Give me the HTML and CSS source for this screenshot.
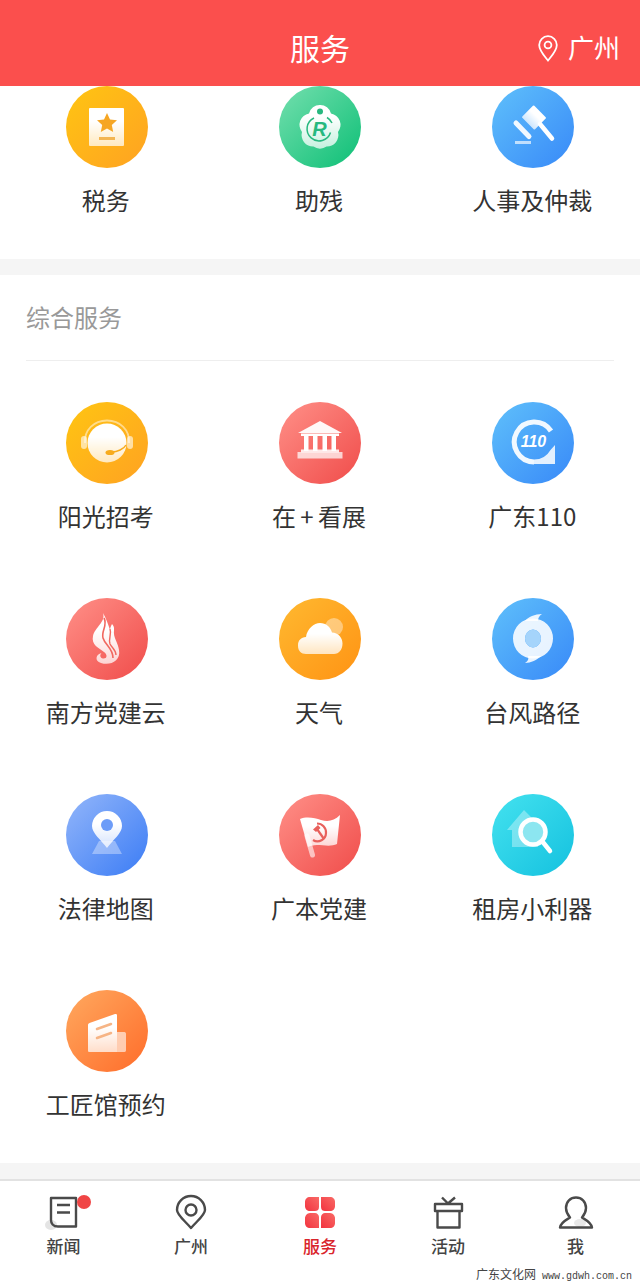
FILE: index.html
```html
<!DOCTYPE html>
<html lang="zh-CN">
<head>
<meta charset="utf-8">
<title>服务</title>
<link rel="stylesheet" href="styles.css">
</head>
<body>
<svg class="defs" width="0" height="0" aria-hidden="true">
  <defs>
    <linearGradient id="w" x1="0" y1="0" x2="0" y2="1"><stop offset="0.35" stop-color="#fff"/><stop offset="1" stop-color="#fff" stop-opacity="0.72"/></linearGradient>
    <linearGradient id="wf" gradientUnits="userSpaceOnUse" x1="0" y1="30" x2="0" y2="64"><stop offset="0" stop-color="#fff"/><stop offset="1" stop-color="#fff" stop-opacity="0.7"/></linearGradient>
    <linearGradient id="petal" x1="1" y1="0" x2="0" y2="1"><stop offset="0" stop-color="#f96a66"/><stop offset="1" stop-color="#f2333f"/></linearGradient>
  </defs>
</svg>
<header class="topbar">
  <h1 class="topbar-title">服务</h1>
  <div class="topbar-loc">
    <svg class="topbar-pin" viewBox="0 0 20 27" fill="none" stroke="#fff" stroke-width="1.8"><path d="M10 25.500C5.500 20 1.200 15.500 1.200 10A8.800 8.800 0 0 1 18.800 10C18.800 15.500 14.500 20 10 25.500Z"/><circle cx="10" cy="10" r="3.400"/></svg>
    <span>广州</span>
  </div>
</header>
<main>
  <section class="card card-first">
    <div class="grid">
      <a class="item">
        <div class="disc yellow"><svg viewBox="0 0 82 82"><rect x="23" y="22" width="35" height="38" rx="1" fill="url(#w)"/><path d="M41 27l3 6.500 7 .8-5.200 4.800 1.400 7L41 42.600 34.800 46l1.400-7-5.200-4.800 7-.8z" fill="#f6a623"/><rect x="33" y="51" width="16" height="3" fill="#f3b552"/></svg></div>
        <span class="label">税务</span>
      </a>
      <a class="item">
        <div class="disc green"><svg viewBox="0 0 82 82"><g fill="url(#wf)"><path d="M41 19a11 11 0 0 1 11 8.500 11.500 11.500 0 0 1 7 18.500 11.500 11.500 0 0 1-11.500 14.500 11 11 0 0 1-13 0A11.500 11.500 0 0 1 23 46a11.500 11.500 0 0 1 7-18.500A11 11 0 0 1 41 19z"/></g><circle cx="41" cy="25.500" r="3" fill="#27b87f"/><path d="M35 32a12 12 0 1 0 16.500 14.500M48 31.500a12 12 0 0 1 5 5.500" fill="none" stroke="#27b87f" stroke-width="1.500"/><text class="icon-r" x="40.500" y="50" text-anchor="middle">R</text></svg></div>
        <span class="label">助残</span>
      </a>
      <a class="item">
        <div class="disc blue"><svg viewBox="0 0 82 82"><rect x="33" y="23" width="18" height="17" rx="1" transform="rotate(45 42 31.500)" fill="url(#w)"/><path d="M48 38L60 52.500" stroke="#fff" stroke-width="4.500" stroke-linecap="round"/><path d="M24 37L37 50.500" stroke="#fff" stroke-opacity=".92" stroke-width="5" stroke-linecap="round"/><rect x="23" y="55" width="16" height="3" fill="#fff" fill-opacity=".65"/></svg></div>
        <span class="label">人事及仲裁</span>
      </a>
    </div>
  </section>

  <section class="card">
    <h2 class="card-title">综合服务</h2>
    <div class="grid grid-main">
      <a class="item">
        <div class="disc yellow"><svg viewBox="0 0 82 82"><circle cx="41" cy="41" r="19.500" fill="url(#w)"/><path d="M19 41C18 28 28 18.500 41 18.500S64 28 63 41" fill="none" stroke="#fff" stroke-opacity=".5" stroke-width="1.800"/><rect x="15" y="34" width="6" height="13" rx="3" fill="#fff" fill-opacity=".6"/><rect x="61" y="34" width="6" height="13" rx="3" fill="#fff" fill-opacity=".6"/><path d="M60 43c-2 4-9 7-14 7" fill="none" stroke="#f7ab1d" stroke-width="1.500"/><ellipse cx="44" cy="50.500" rx="4.500" ry="2.600" fill="#f7ab1d"/></svg></div>
        <span class="label">阳光招考</span>
      </a>
      <a class="item">
        <div class="disc red"><svg viewBox="0 0 82 82"><path d="M41 19L63 31H19z" fill="#fff" fill-opacity=".95"/><rect x="22" y="31.500" width="38" height="2.500" fill="#fff"/><path d="M25 34h4.500v15H25zM34 34h4.500v15H34zM43.500 34H48v15h-4.500zM52.500 34H57v15h-4.500z" fill="#fff"/><rect x="22" y="47.500" width="38" height="3" fill="#fff" fill-opacity=".85"/><rect x="18.500" y="50" width="45" height="6.500" fill="#fff" fill-opacity=".72"/></svg></div>
        <span class="label label-tight">在 + 看展</span>
      </a>
      <a class="item">
        <div class="disc blue"><svg viewBox="0 0 82 82"><path d="M59 29A20 20 0 1 0 42 60" fill="none" stroke="#fff" stroke-opacity=".92" stroke-width="5"/><path d="M42 62H63V43L58.500 48A19 19 0 0 1 42 57.500Z" fill="#fff" fill-opacity=".85"/><text class="icon-110" x="41.500" y="45" text-anchor="middle">110</text></svg></div>
        <span class="label">广东110</span>
      </a>

      <a class="item">
        <div class="disc red"><svg viewBox="0 0 82 82"><path d="M37 15C40 24 29 29 27 38C25 47 33 50 38 54C42 57 41 61 37 60.500C34 60 33.500 57 35.500 55C30 56 28 63 35 65C44 68 55 63 53 52C52 44 47 40 48 32C48.500 29 47 27 46 26C45 28 44 30 44 32C42 26 40 20 37 15Z" fill="url(#w)"/><path d="M38 20C42 27 35 33 37 40C39 47 47 50 47 60" fill="none" stroke="#f1685f" stroke-width="1.600"/><path d="M44 31C46 36 42 41 44 46C46 50 50 52 50 57" fill="none" stroke="#f1685f" stroke-width="1.400"/></svg></div>
        <span class="label">南方党建云</span>
      </a>
      <a class="item">
        <div class="disc amber"><svg viewBox="0 0 82 82"><circle cx="55" cy="29" r="9" fill="#fff" fill-opacity=".4"/><path d="M27 56c-5 0-8-3-8-8.500s3-8 8-8.500C28 31 35 25 41 25c6 0 10.500 4 12 9.500 6 0 10.500 5 10.500 11 0 6-3.500 10.500-8.500 10.500z" fill="url(#w)"/></svg></div>
        <span class="label">天气</span>
      </a>
      <a class="item">
        <div class="disc blue"><svg viewBox="0 0 82 82"><g fill="#fff" fill-opacity=".88"><path d="M33 23C36 19 43 16 50 16C47 18 46 20 46 23Z"/><path d="M49 58C45 62 39 65 33 65C36 63 37 61 36 58Z"/></g><path d="M41 20.500A20 20 0 1 1 41 60.500A20 20 0 1 1 41 20.500ZM41 31.500A8 9 0 1 0 41 49.500A8 9 0 1 0 41 31.500Z" fill="#fff" fill-opacity=".88"/><ellipse cx="41" cy="40.500" rx="8" ry="9" fill="#a5d4fb"/></svg></div>
        <span class="label">台风路径</span>
      </a>

      <a class="item">
        <div class="disc periwinkle"><svg viewBox="0 0 82 82"><path d="M33 47h16l7 13H26z" fill="#fff" fill-opacity=".35"/><path d="M41 54C35 46 26 39 26 32a15 15 0 0 1 30 0c0 7-9 14-15 22z" fill="url(#w)"/><circle cx="41" cy="31" r="6" fill="#6c9cf8"/></svg></div>
        <span class="label">法律地图</span>
      </a>
      <a class="item">
        <div class="disc red"><svg viewBox="0 0 82 82"><path d="M28 42L33.500 61" stroke="#fff" stroke-opacity=".6" stroke-width="5" stroke-linecap="round"/><path d="M21 25C28 22 36 24 42 26C49 28 55 27 61 21L58 50C52 53 44 51 38 51C34 51 31 52 29 53Z" fill="url(#w)"/><path d="M38 29.500A9 9 0 0 1 47 39A8.500 8.500 0 0 1 34 46" fill="none" stroke="#e8605c" stroke-width="2.200"/><path d="M38 35L45 45" stroke="#e8605c" stroke-width="2.200"/><path d="M34 35.500L39 31L41.500 34L37 38Z" fill="#e8605c"/></svg></div>
        <span class="label">广本党建</span>
      </a>
      <a class="item">
        <div class="disc cyan"><svg viewBox="0 0 82 82"><path d="M15 36L32 16L46 30V53H20V36Z" fill="#fff" fill-opacity=".35"/><circle cx="41" cy="38" r="12.500" fill="#8ce6f0" stroke="#fff" stroke-width="4.500"/><path d="M50 47L58 57" stroke="#fff" stroke-width="4.500" stroke-linecap="round"/></svg></div>
        <span class="label">租房小利器</span>
      </a>

      <a class="item">
        <div class="disc tangerine"><svg viewBox="0 0 82 82"><path d="M51 42h7.500c1 0 1.500 1 1.500 2V60c0 1-.5 2-1.500 2H51z" fill="#fff" fill-opacity=".6"/><path d="M22 35c0-1 .5-1.500 1.500-2L49 24c1-.3 2 .2 2 1V62H23.500c-1 0-1.500-.5-1.500-1.500z" fill="url(#w)"/><path d="M31 39L45 34M31 48L45 43" stroke="#f6b485" stroke-width="2.500" stroke-linecap="round"/></svg></div>
        <span class="label">工匠馆预约</span>
      </a>
    </div>
  </section>
</main>
<nav class="tabbar">
  <a class="tab">
    <svg class="tab-icon" viewBox="0 0 44 36"><ellipse cx="9" cy="30" rx="6" ry="5" fill="#e4e4e4"/><path d="M9 3H34V31.500H16C11 31.500 9 28 9 25z" fill="none" stroke="#4a4a4a" stroke-width="2.400" stroke-linejoin="round"/><path d="M15 10H28M15 17.500H28" stroke="#4a4a4a" stroke-width="2.400"/><circle cx="42" cy="7" r="7" fill="#f04545"/></svg>
    <span class="tab-label">新闻</span>
  </a>
  <a class="tab">
    <svg class="tab-icon" viewBox="0 0 44 36" fill="none" stroke="#4a4a4a" stroke-width="2.400"><path d="M22 33C16 26 8 20 8 15A14 14 0 0 1 36 15C36 20 28 26 22 33Z" stroke-linejoin="round"/><circle cx="22" cy="15" r="5.500"/></svg>
    <span class="tab-label">广州</span>
  </a>
  <a class="tab tab-on">
    <svg class="tab-icon" viewBox="0 0 44 36" fill="url(#petal)"><path d="M7 7c0-3 2-5 5-5h9v10c0 3-2 4-4 4h-5c-3 0-5-2-5-5z"/><path d="M37 7c0-3-2-5-5-5h-9v10c0 3 2 4 4 4h5c3 0 5-2 5-5z"/><path d="M7 28c0 3 2 5 5 5h9V22c0-2-2-4-4-4h-5c-3 0-5 3-5 5z"/><path d="M37 28c0 3-2 5-5 5h-9V22c0-2 2-4 4-4h5c3 0 5 3 5 5z"/></svg>
    <span class="tab-label">服务</span>
  </a>
  <a class="tab">
    <svg class="tab-icon" viewBox="0 0 44 36" fill="none" stroke="#4a4a4a" stroke-width="2.400" stroke-linejoin="round"><path d="M9 9H36V16H9zM11.500 16V32.500H33.500V16M16 2.500L22 8.500 29 2.500"/></svg>
    <span class="tab-label">活动</span>
  </a>
  <a class="tab">
    <svg class="tab-icon" viewBox="0 0 44 36" fill="none" stroke="#4a4a4a" stroke-width="2.400" stroke-linejoin="round"><ellipse cx="26" cy="28" rx="6" ry="4" fill="#e8e8e8" stroke="none"/><path d="M16 22.500C13 19 12 15.500 12 13C12 6.500 16.500 2.500 22 2.500S32 6.500 32 13C32 15.500 31 19 28 22.500C31 24.500 37 27 38 32.500H6C7 27 13 24.500 16 22.500Z"/></svg>
    <span class="tab-label">我</span>
  </a>
</nav>
<div class="watermark"><span class="wm-cn">广东文化网</span><span class="wm-en">www.gdwh.com.cn</span></div>
</body>
</html>
```

FILE: styles.css
```css
* { box-sizing: border-box; }

html, body {
  margin: 0;
  padding: 0;
  height: 1285px;
  overflow: hidden;
}

body {
  position: relative;
  display: flex;
  flex-direction: column;
  background: #f5f5f5;
  font-family: "Noto Sans CJK SC", "Noto Sans", sans-serif;
  color: #333;
}

.defs { display: block; height: 0; }

.topbar {
  position: relative;
  display: flex;
  align-items: center;
  justify-content: center;
  height: 86px;
  padding-top: 8px;
  background: #fb4f4d;
  color: #fff;
}

.topbar-title {
  margin: 0;
  font-size: 30px;
  line-height: 40px;
  font-weight: 400;
}

.topbar-loc {
  position: absolute;
  right: 20px;
  top: 27px;
  display: flex;
  align-items: center;
  gap: 10px;
  font-size: 26px;
  line-height: 40px;
  font-weight: 400;
}

.topbar-pin { width: 20px; height: 27px; margin-top: 2px; }

.card {
  background: #fff;
  margin-bottom: 16px;
  padding-bottom: 42px;
}

.card-title {
  margin: 0 26px;
  padding: 25px 0 26px;
  border-bottom: 1px solid #eeeeee;
  font-size: 24px;
  line-height: 34px;
  font-weight: 400;
  color: #999;
}

.grid {
  display: grid;
  grid-template-columns: repeat(3, 1fr);
  row-gap: 65px;
}

.grid-main { padding-top: 41px; }

.item {
  display: flex;
  flex-direction: column;
  align-items: center;
  gap: 15px;
}

.disc {
  width: 82px;
  height: 82px;
  border-radius: 50%;
}

.disc svg { display: block; width: 82px; height: 82px; }

.yellow { background: linear-gradient(135deg, #ffc512, #ffa222); }
.green { background: linear-gradient(135deg, #74dfae, #0dbf76); }
.blue { background: linear-gradient(135deg, #5fc0fb, #3889f8); }
.red { background: linear-gradient(135deg, #ff9088, #f04c4a); }
.amber { background: linear-gradient(135deg, #ffb930, #ff9314); }
.periwinkle { background: linear-gradient(135deg, #93b6fa, #3b7cf5); }
.cyan { background: linear-gradient(135deg, #44e2ef, #14c1df); }
.tangerine { background: linear-gradient(135deg, #ffa95f, #ff6c2a); }

.icon-r {
  font-family: "Liberation Sans", sans-serif;
  font-size: 20px;
  font-weight: 700;
  font-style: italic;
  fill: #27b87f;
}

.icon-110 {
  font-family: "Liberation Sans", sans-serif;
  font-size: 16px;
  font-weight: 700;
  font-style: italic;
  fill: #fff;
}

.label {
  padding-right: 2px;
  font-size: 24px;
  line-height: 34px;
  font-weight: 400;
  color: #333;
  white-space: nowrap;
}

.label-tight { word-spacing: -1px; }

.tabbar {
  flex: 1;
  display: grid;
  grid-template-columns: 127px 128px 130px 126px 129px;
  padding-top: 14px;
  background: #fff;
  border-top: 2px solid #e2e2e2;
}

.tab {
  display: flex;
  flex-direction: column;
  align-items: center;
  gap: 6px;
}

.tab-icon { display: block; width: 44px; height: 36px; margin-bottom: -1px; overflow: visible; }

.tab-label {
  font-size: 17px;
  line-height: 20px;
  font-weight: 500;
  color: #444;
}

.tab-on .tab-label { color: #d9252c; }

.watermark {
  position: absolute;
  right: 8px;
  bottom: 1px;
  display: flex;
  align-items: baseline;
  gap: 6px;
  color: #444;
  line-height: 14px;
}

.wm-cn { font-size: 12px; font-weight: 400; }

.wm-en {
  font-family: "Liberation Mono", monospace;
  font-size: 10px;
}
```
